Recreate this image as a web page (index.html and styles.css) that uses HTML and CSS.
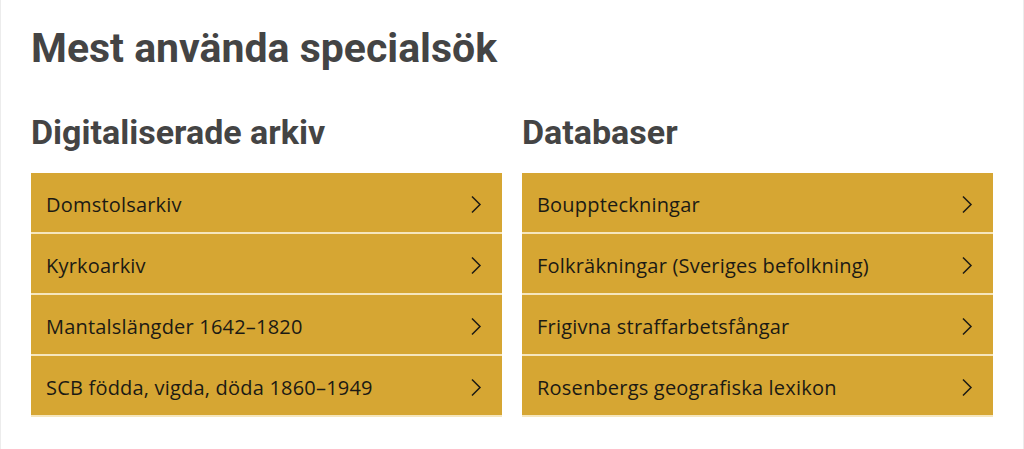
FILE: index.html
```html
<!DOCTYPE html>
<html>
    <head>
        <title>Mest använda specialsök</title>
        <link rel="stylesheet" href="styles.css">
    </head>
    <body>
        <div class="page">
            <h1>Mest använda specialsök</h1>

            <div class="columns">
                <!-- Digitaliserade arkiv -->
                <div class="column">
                    <h2>Digitaliserade arkiv</h2>
                    <ul class="links">
                        <li><a href="#">Domstolsarkiv<svg class="chev" viewBox="0 0 12 18"><polyline points="2,1 10,9 2,17"/></svg></a></li>
                        <li><a href="#">Kyrkoarkiv<svg class="chev" viewBox="0 0 12 18"><polyline points="2,1 10,9 2,17"/></svg></a></li>
                        <li><a href="#">Mantalslängder 1642–1820<svg class="chev" viewBox="0 0 12 18"><polyline points="2,1 10,9 2,17"/></svg></a></li>
                        <li><a href="#">SCB födda, vigda, döda 1860–1949<svg class="chev" viewBox="0 0 12 18"><polyline points="2,1 10,9 2,17"/></svg></a></li>
                    </ul>
                </div>

                <!-- Databaser -->
                <div class="column">
                    <h2>Databaser</h2>
                    <ul class="links">
                        <li><a href="#">Bouppteckningar<svg class="chev" viewBox="0 0 12 18"><polyline points="2,1 10,9 2,17"/></svg></a></li>
                        <li><a href="#">Folkräkningar (Sveriges befolkning)<svg class="chev" viewBox="0 0 12 18"><polyline points="2,1 10,9 2,17"/></svg></a></li>
                        <li><a href="#">Frigivna straffarbetsfångar<svg class="chev" viewBox="0 0 12 18"><polyline points="2,1 10,9 2,17"/></svg></a></li>
                        <li><a href="#">Rosenbergs geografiska lexikon<svg class="chev" viewBox="0 0 12 18"><polyline points="2,1 10,9 2,17"/></svg></a></li>
                    </ul>
                </div>
            </div>
        </div>
    </body>
</html>
```

FILE: styles.css
```css
/* Page frame */
body {
margin: 0;
padding: 0;
background-color: #fff;
font-family: "Open Sans", Arial, sans-serif;
}

.page {
height: 449px;
box-sizing: border-box;
padding: 22px 30px 0 30px;
border-left: 1px solid #ececec;
border-right: 1px solid #ececec;
}

h1 {
margin: 0 0 38px 0;
font-family: Roboto, Arial, sans-serif;
font-size: 41px;
font-weight: bold;
line-height: 52px;
color: #444;
}

/* Two columns side by side */
.columns {
display: grid;
grid-template-columns: 1fr 1fr;
column-gap: 20px;
}

h2 {
margin: 0 0 21px 0;
font-family: Roboto, Arial, sans-serif;
font-size: 34px;
font-weight: bold;
line-height: 40px;
color: #444;
}

.links {
list-style: none;
margin: 0;
padding: 0;
}

.links li {
border-bottom: 2px solid #f6e6bd;
}

.links a {
display: flex;
align-items: center;
justify-content: space-between;
box-sizing: border-box;
height: 59px;
padding: 3px 20px 0 15px;
background-color: #d6a633;
color: #1c1a14;
font-size: 20px;
letter-spacing: 0.2px;
text-decoration: none;
}

.chev {
width: 12px;
height: 19px;
fill: none;
stroke: #1c1a14;
stroke-width: 1.5;
}
```
